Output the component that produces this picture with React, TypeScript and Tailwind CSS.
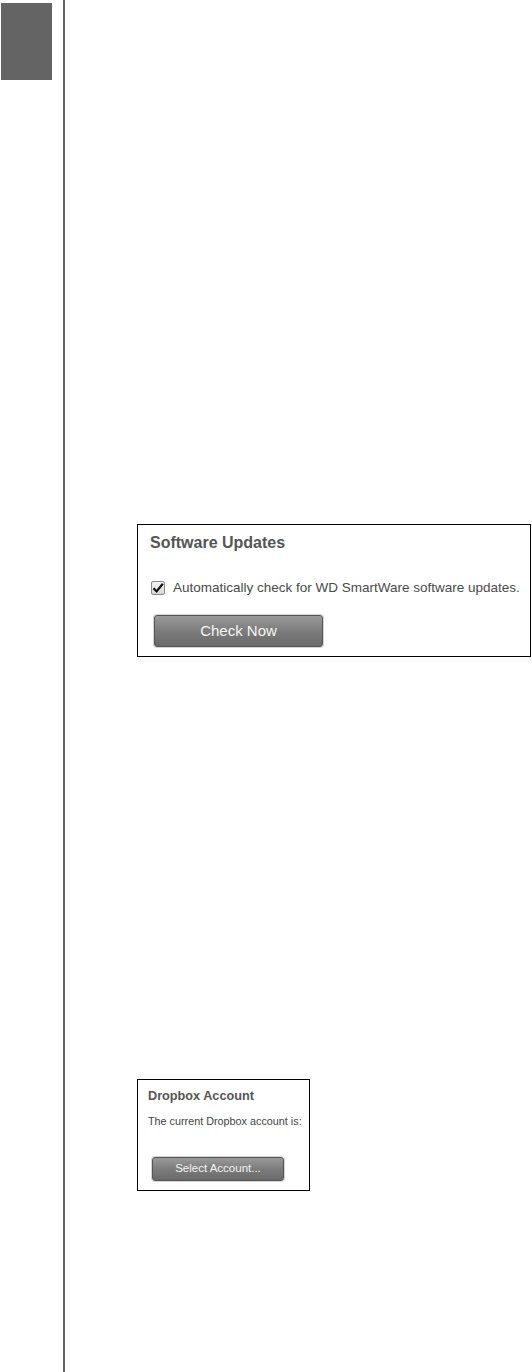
import React from "react";

const CheckBox = () => (
  <span className="flex items-center justify-center w-[14px] h-[14px] border border-[#8c8c8c] rounded-[2px] bg-gradient-to-b from-[#f4f4f4] to-[#d8d8d8]">
    <svg width="12" height="12" viewBox="0 0 12 12">
      <path d="M1.5 6.2 L4.6 9.4 L10.8 1.8" fill="none" stroke="#111" strokeWidth="2.2" />
    </svg>
  </span>
);

const GrayButton = ({ label, className }: { label: string; className: string }) => (
  <div
    className={
      "flex items-center justify-center border border-[#555] rounded-[3px] text-[#f5f5f5] shadow-[0_0_0_1px_#d6d6d6] bg-gradient-to-b from-[#9a9a9a] via-[#7c7c7c] to-[#6a6a6a] " +
      className
    }
  >
    {label}
  </div>
);

const App = () => {
  return (
    <div className="w-[532px] h-[1372px] bg-white flex font-['Liberation_Sans',Arial,sans-serif] overflow-hidden">
      {/* side tab */}
      <div className="w-[63px] shrink-0 pt-[3px] pl-[1px]">
        <div className="w-[51px] h-[77px] bg-[#646464]" />
      </div>
      <div className="w-[2px] h-full shrink-0 bg-[#646464]" />

      {/* content */}
      <div className="flex flex-col pl-[72px] pt-[524px]">
        {/* Software Updates */}
        <div className="w-[394px] h-[133px] border border-black pl-[12px] pt-[9px]">
          <div className="text-[16px] leading-[18px] font-bold text-[#555]">Software Updates</div>
          <div className="flex items-center mt-[28px] ml-[1px] gap-[8px]">
            <CheckBox />
            <span className="text-[13.5px] leading-[16px] text-[#4a4a4a]">
              Automatically check for WD SmartWare software updates.
            </span>
          </div>
          <GrayButton label="Check Now" className="mt-[19px] ml-[4px] w-[169px] h-[32px] text-[15px]" />
        </div>

        {/* Dropbox Account */}
        <div className="mt-[422px] w-[173px] h-[112px] border border-black pl-[10px] pt-[9px]">
          <div className="text-[12.7px] leading-[15px] font-bold text-[#555]">Dropbox Account</div>
          <div className="mt-[11px] text-[10.8px] leading-[13px] text-[#444]">The current Dropbox account is:</div>
          <GrayButton label="Select Account..." className="mt-[29px] ml-[4px] w-[132px] h-[24px] text-[11.5px]" />
        </div>
      </div>
    </div>
  );
};

export default App;
